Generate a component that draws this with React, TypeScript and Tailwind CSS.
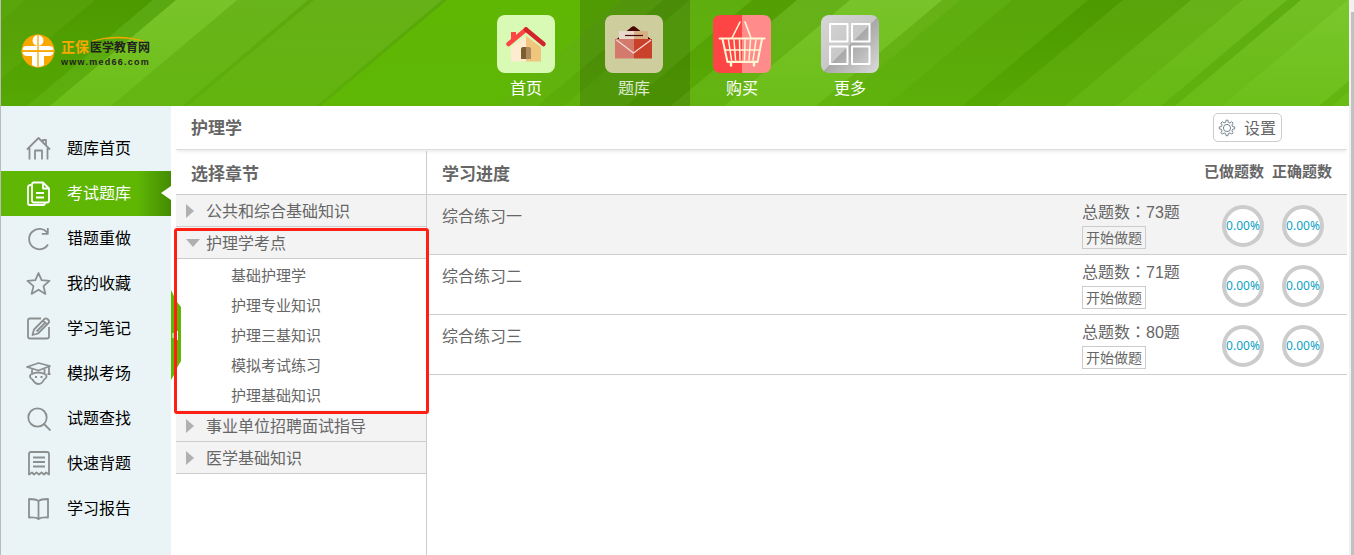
import type { ReactNode } from "react";

const FONT = "font-['Noto_Sans','Noto_Sans_CJK_SC',sans-serif]";

// Diagonal header bands: x where the band starts and ends on the top edge, fill.
const BANDS: [number, number, string][] = [
  [-130, 25, "#57a50a"],
  [25, 95, "#559f08"],
  [95, 153, "#4c9900"],
  [153, 176, "#5aa812"],
  [176, 237, "#78c42a"],
  [237, 308, "#68b41b"],
  [308, 314, "#5ba90d"],
  [314, 442, "#66b117"],
  [442, 447, "#58a608"],
  [447, 622, "#5fb704"],
  [622, 663, "#61b010"],
  [663, 690, "#58a40a"],
  [690, 752, "#5fae10"],
  [752, 797, "#529e04"],
  [797, 850, "#66b11a"],
  [850, 942, "#78c42a"],
  [942, 960, "#67b118"],
  [960, 1012, "#5ead10"],
  [1012, 1088, "#58a50a"],
  [1088, 1123, "#4c9900"],
  [1123, 1191, "#59a40b"],
  [1191, 1243, "#66b118"],
  [1243, 1287, "#6fbc20"],
  [1287, 1301, "#5ead12"],
  [1301, 1348, "#72bf24"],
  [1348, 1445, "#7ac72d"],
  [1445, 1458, "#65b416"],
  [1458, 1500, "#72bf24"],
];

function HeaderBackground() {
  return (
    <svg className="absolute inset-0 h-full w-full" viewBox="0 0 1348 106" preserveAspectRatio="none">
      <defs>
        <linearGradient id="fade" x1="0" y1="0" x2="0" y2="1">
          <stop offset="0" stopColor="#60b706" stopOpacity="0" />
          <stop offset="1" stopColor="#60b706" stopOpacity="0.5" />
        </linearGradient>
      </defs>
      {BANDS.map(([a, b, fill]) => (
        <polygon key={a} points={`${a - 1},0 ${b},0 ${b - 126},106 ${a - 127},106`} fill={fill} />
      ))}
      <rect width="1348" height="106" fill="url(#fade)" />
    </svg>
  );
}

function Logo() {
  return (
    <div className="flex items-center">
      <svg width="34" height="34" viewBox="0 0 34 34">
        <circle cx="17" cy="17" r="16.5" fill="#f8a800" />
        <g fill="#fff">
          <circle cx="17" cy="6.5" r="5.4" />
          <path d="M1.500 16.200q0-4.200 4-4.200h23q4 0 4 4.200z" />
          <path d="M1.500 18h31q-.5 4-4.500 4h-5v9q-2.500 2-6 2t-6-2v-9H6q-4 0-4.500-4z" />
        </g>
        <path d="M17 0v34M0 17.200h34" stroke="#f8a800" strokeWidth="1.300" />
      </svg>
      <div className="relative ml-[6px] h-[34px] w-[92px] whitespace-nowrap">
        <svg className="absolute top-[2px] left-[31px]" width="52" height="6" viewBox="0 0 52 6">
          <path d="M0 5Q26-3 52 5Q26-1 0 5Z" fill="#f8a800" stroke="#f8a800" strokeWidth=".5" />
        </svg>
        <div className="flex items-baseline pt-[4px] leading-[18px]">
          <span className="text-[14px] font-bold text-[#f8a800]">正保</span>
          <span className="ml-px text-[12px] font-bold text-[#231f1c]">医学教育网</span>
        </div>
        <div className="font-['Liberation_Sans',sans-serif] text-[9px] leading-[10px] font-bold tracking-[1.250px] text-[#231f1c]">
          www.med66.com
        </div>
      </div>
    </div>
  );
}

const homeIcon = (
  <svg viewBox="0 0 58 58" className="size-[58px]">
    <rect width="58" height="58" rx="8" fill="#d9fab4" />
    <path d="M14 32L29 21v25.500H14z" fill="#feecd0" />
    <path d="M29 21l15 11v14.500H29z" fill="#f0c67e" />
    <path d="M14 17h5v7l-5 4z" fill="#fe4545" />
    <path d="M11.500 29L29 14.500" stroke="#fe4545" strokeWidth="4.500" strokeLinecap="round" />
    <path d="M29 14.500L46.500 29" stroke="#d3232b" strokeWidth="4.500" strokeLinecap="round" />
    <path d="M29 32h-3q-2 0-2 2v10h5z" fill="#7d5e30" />
    <path d="M29 32h3q2 0 2 2v10h-5z" fill="#ac8a60" />
  </svg>
);

const bankIcon = (
  <svg viewBox="0 0 58 58" className="size-[58px]">
    <rect width="58" height="58" rx="8" fill="#cecd9d" />
    <path d="M10.500 25L26 12.500q2.500-2.500 5 0L47 25z" fill="#4a0503" />
    <path d="M14 16h15v9H14z" fill="#e8d9cc" />
    <path d="M29 16h14v9H29z" fill="#d7b183" />
    <path d="M20 20.500h18" stroke="#4a0503" strokeWidth="1.200" />
    <path d="M10 24h19v19.500H10z" fill="#d47a6c" />
    <path d="M29 24h18v19.500H29z" fill="#c9412b" />
    <path d="M11.500 25L28.500 38 46 25" fill="none" stroke="#f2dbd3" strokeWidth="1.300" />
  </svg>
);

const buyIcon = (
  <svg viewBox="0 0 58 58" className="size-[58px]">
    <path d="M29 0H8Q0 0 0 8v42q0 8 8 8h21z" fill="#fe4545" />
    <path d="M29 0h21q8 0 8 8v42q0 8-8 8H29z" fill="#ff8c8b" />
    <g fill="none" stroke="#fff6d5" strokeLinecap="round" strokeLinejoin="round">
      <path d="M19 23l8-16M38 23L32 7" strokeWidth="1.600" />
      <path d="M6.500 23.500h45" strokeWidth="2" />
      <path d="M9.500 24l5 23h30l4.500-23" strokeWidth="2" />
      <path d="M12.500 35h34M14.500 46.500h29" strokeWidth="1.600" />
      <path d="M15.500 25l3 20M21 25l1.500 20M26.500 25l.5 20M32 25l-.5 20M37.500 25L36 45M43 25l-3 20" strokeWidth="1.500" />
      <path d="M18 48v2.500M41 48v2.500" strokeWidth="2.500" />
    </g>
  </svg>
);

const moreIcon = (
  <svg viewBox="0 0 58 58" className="size-[58px]">
    <defs>
      <linearGradient id="tile" x1="0" y1="0" x2="1" y2="1">
        <stop offset="0" stopColor="#d6d6d6" />
        <stop offset=".5" stopColor="#c8c8c8" />
        <stop offset=".51" stopColor="#a8a8a8" />
        <stop offset="1" stopColor="#dcdcdc" />
      </linearGradient>
    </defs>
    <rect width="58" height="58" rx="8" fill="url(#tile)" />
    <g fill="none" stroke="#fff" strokeWidth="2" strokeLinejoin="round">
      <rect x="9" y="9" width="17.500" height="17.500" />
      <rect x="31" y="9" width="17.500" height="17.500" />
      <rect x="9" y="31.500" width="17.500" height="17.500" />
      <rect x="31" y="31.500" width="17.500" height="17.500" />
    </g>
  </svg>
);

const TABS: { label: string; icon: ReactNode; active?: boolean }[] = [
  { label: "首页", icon: homeIcon },
  { label: "题库", icon: bankIcon, active: true },
  { label: "购买", icon: buyIcon },
  { label: "更多", icon: moreIcon },
];

const MENU: { label: string; icon: ReactNode; active?: boolean }[] = [
  {
    label: "题库首页",
    icon: <path d="M1 13.500L12.500 2 24 13.500M3.500 12v11.500M21.500 12v11.500M9 23.500V14.500h7v9M17 5.500V4h3v5" />,
  },
  {
    label: "考试题库",
    active: true,
    icon: (
      <>
        <path d="M6 3.500q0-2 2-2h9l6 6v12q0 2-2 2H8q-2 0-2-2zM17 1.500v6h6M10 12h8M10 16.500h8" />
        <path d="M5 4Q2 4 2 6v16q0 2 2 2h13q2 0 2-2" />
      </>
    ),
  },
  {
    label: "错题重做",
    icon: <path d="M21.500 7A10.200 10.200 0 1 0 22 18.500M21.800 2v5.800h-6" />,
  },
  {
    label: "我的收藏",
    icon: <path d="M12.500 2l3.100 7.200 7.900.7-6 5.200 1.900 7.800-6.900-4.200-6.900 4.200 1.900-7.800-6-5.200 7.900-.7z" />,
  },
  {
    label: "学习笔记",
    icon: (
      <>
        <path d="M15 2.500H4q-2 0-2 2v16q0 2 2 2h17q2 0 2-2V11" />
        <path d="M6.500 19l1.500-5.500L18.500 3q1.500-1.500 3.500.5t.5 3.500L12 17.500zM17 4.500l4 4M10.500 15.500l8-8" />
      </>
    ),
  },
  {
    label: "模拟考场",
    icon: (
      <>
        <path d="M1 6L12.500 2 24 5 12.500 9.500zM6 8.500v4.500q6-3 12.500 0V8M23 6v8M21.500 13h3" />
        <path d="M5 13q-2.500 3.500 1.500 5.500Q9 23 12.500 23t5.500-4.500q4-2 1.500-5.500M9 16h2M14.500 16h2" />
      </>
    ),
  },
  {
    label: "试题查找",
    icon: (
      <>
        <circle cx="11.500" cy="11.500" r="9.200" />
        <path d="M18 18l6.500 6.500" />
      </>
    ),
  },
  {
    label: "快速背题",
    icon: (
      <>
        <path d="M3 23.500V3q0-2 2-2h16q2 0 2 2v20.500l-3-2-2 2-2.500-2-2.500 2-2.500-2-2.500 2-2-2z" />
        <path d="M7 6.500h12M7 11h12M7 15.500h12" />
      </>
    ),
  },
  {
    label: "学习报告",
    icon: <path d="M12.500 5Q10 3 3 3v18.500q7-.5 9.500 1.500 2.500-2 9.500-1.500V3q-7 0-9.500 2zM12.500 5V23" />,
  },
];

const SUB_CHAPTERS = ["基础护理学", "护理专业知识", "护理三基知识", "模拟考试练习", "护理基础知识"];

const EXERCISES = [
  { name: "综合练习一", total: 73 },
  { name: "综合练习二", total: 71 },
  { name: "综合练习三", total: 80 },
];

function ChapterRow({ label, open = false }: { label: string; open?: boolean }) {
  return (
    <div className="flex h-8 items-center border-b border-[#ccc] bg-[#f3f3f3]">
      <svg width="30" height="14" viewBox="0 0 30 14" className="shrink-0" fill="#b0b0b0">
        {open ? <path d="M10 3h14l-7 8z" /> : <path d="M10 0l8 7-8 7z" />}
      </svg>
      <span className="text-[16px] leading-8">{label}</span>
    </div>
  );
}

function Ring() {
  return (
    <div className="flex size-[42px] items-center justify-center rounded-full border-4 border-[#ccc] bg-white font-['Noto_Sans',sans-serif] text-[12px] text-[#0d9fc4]">
      0.00%
    </div>
  );
}

function Sidebar() {
  return (
    <nav className="w-[170px] shrink-0 bg-[#eaf4f6] pt-5 text-black">
      {MENU.map((m) => (
        <div
          key={m.label}
          className={`relative flex h-[45px] items-center pl-[25px] ${
            m.active ? "bg-linear-to-r from-[#5fb704] from-80% to-[#448c02] text-white" : ""
          }`}
        >
          <svg
            width="25"
            height="25"
            viewBox="0 0 25 25"
            fill="none"
            stroke={m.active ? "#fff" : "#8c8f90"}
            strokeWidth="1.800"
            strokeLinejoin="round"
            className="-mt-px"
          >
            {m.icon}
          </svg>
          <span className="-mt-[2px] ml-4 text-[16px]">{m.label}</span>
          {m.active && (
            <svg className="absolute top-[15px] right-0" width="10" height="14" viewBox="0 0 10 14">
              <path d="M10 0v14L0 7z" fill="#fff" />
            </svg>
          )}
        </div>
      ))}
    </nav>
  );
}

function Chapters() {
  return (
    <section className="w-[251px] shrink-0 border-r border-[#ccc]">
      <h2 className="h-[44px] border-b border-[#ccc] pl-[15px] text-[17px] leading-[46px] font-bold">选择章节</h2>
      <ChapterRow label="公共和综合基础知识" />
      <div className="relative">
        <ChapterRow label="护理学考点" open />
        <ul className="pt-px">
          {SUB_CHAPTERS.map((s) => (
            <li key={s} className="h-[30px] pl-[55px] text-[15px] leading-[30px]">
              {s}
            </li>
          ))}
        </ul>
        {/* highlight frame round the open chapter */}
        <div className="absolute top-px -left-[2px] h-[186px] w-[255px] rounded-[3px] border-3 border-[#ff2015]" />
      </div>
      <ChapterRow label="事业单位招聘面试指导" />
      <ChapterRow label="医学基础知识" />
    </section>
  );
}

function Progress() {
  return (
    <section className="flex-1">
      <div className="flex h-[44px] justify-between border-b border-[#ccc] pr-[15px] pl-[15px] font-bold">
        <h2 className="text-[17px] leading-[46px]">学习进度</h2>
        <div className="flex gap-2 text-[15px] leading-[41px]">
          <span>已做题数</span>
          <span>正确题数</span>
        </div>
      </div>
      {EXERCISES.map((e, i) => (
        <div
          key={e.name}
          className={`flex h-[60px] border-b border-[#ccc] pl-[15px] ${i === 0 ? "bg-[#f3f3f3]" : ""}`}
        >
          <span className="flex-1 text-[16px] leading-[42px]">{e.name}</span>
          <div className="w-[140px] pt-[5px]">
            <div className="h-[22px] text-[16px] leading-[22px] whitespace-nowrap">
              总题数<span className="font-['Noto_Sans_CJK_TC',sans-serif]">：</span>
              <span className="font-['Liberation_Sans',sans-serif]">{e.total}</span>题
            </div>
            <button className="mt-[4px] block h-[23px] w-16 border border-[#ccc] text-[14px] leading-[19px]">
              开始做题
            </button>
          </div>
          <div className="flex gap-[18px] pt-[10px] pr-[23px]">
            <Ring />
            <Ring />
          </div>
        </div>
      ))}
    </section>
  );
}

export default function App() {
  return (
    <div className={`flex h-[555px] w-[1354px] overflow-hidden bg-white text-[#666] ${FONT}`}>
      <div className="w-px bg-[#bbb]" />
      <div className="flex w-[1348px] flex-col">
        <header className="relative h-[106px] shrink-0 overflow-hidden">
          <HeaderBackground />
          <div className="relative flex h-full">
            <div className="w-[470px] pt-[34px] pl-5">
              <Logo />
            </div>
            <div className="flex pl-px">
              {TABS.map((t) => (
                <div
                  key={t.label}
                  className={`flex flex-col items-center pt-[15px] text-[16px] text-white ${
                    t.active ? "-mr-[2px] w-[110px] bg-black/15 pr-[2px]" : "w-[108px]"
                  }`}
                >
                  {t.icon}
                  <span className={`mt-[3px] leading-6 ${t.active ? "opacity-80" : ""}`}>{t.label}</span>
                </div>
              ))}
            </div>
          </div>
        </header>
        <div className="flex flex-1">
          <Sidebar />
          <main className="relative flex flex-1 flex-col pr-[2px] pl-[5px]">
            {/* collapse handle of the side menu */}
            <svg className="absolute top-[184px] left-0" width="10" height="90" viewBox="0 0 10 90">
              <path d="M0 0L3 6V8l7 9v54l-7 12v2l-3 5z" fill="#5fb704" />
              <path d="M2 43v5M6.500 41v9" stroke="#fff" strokeWidth="1" />
            </svg>
            <div className="flex h-[44px] items-center justify-between border-b border-[#ddd] pr-[65px] pl-[15px] shadow-[0_3px_3px_-1px_rgba(0,0,0,0.08)]">
              <h1 className="text-[17px] font-bold">护理学</h1>
              <button className="flex h-[29px] w-[69px] items-center rounded-[5px] border border-[#ccc] pl-[4px] text-[16px]">
                <svg width="18" height="18" viewBox="0 0 18 18" fill="none" stroke="#748490" strokeWidth="1">
                  <circle cx="9" cy="9" r="3.600" />
                  <path d="M7.700 3.300L8 1.200h2l.3 2.100 1.700.7 1.700-1.300 1.400 1.400L13.900 6l.7 1.600 2.100.3v2l-2.100.4-.7 1.700 1.200 1.700-1.400 1.400-1.700-1.200-1.700.7-.3 2.100H8l-.3-2.100-1.700-.7-1.700 1.200-1.400-1.400L4.100 12l-.7-1.700-2.100-.4v-2l2.100-.3L4.100 6 2.900 4.100l1.400-1.400L6 4z" />
                </svg>
                <span className="ml-[8px] whitespace-nowrap">设置</span>
              </button>
            </div>
            <div className="flex flex-1 pt-px">
              <Chapters />
              <Progress />
            </div>
          </main>
        </div>
      </div>
      <div className="flex w-[5px] bg-[#f1f1f1] pt-3 pl-[2px]">
        <div className="flex-1 bg-[#c1c1c1]" />
      </div>
    </div>
  );
}
